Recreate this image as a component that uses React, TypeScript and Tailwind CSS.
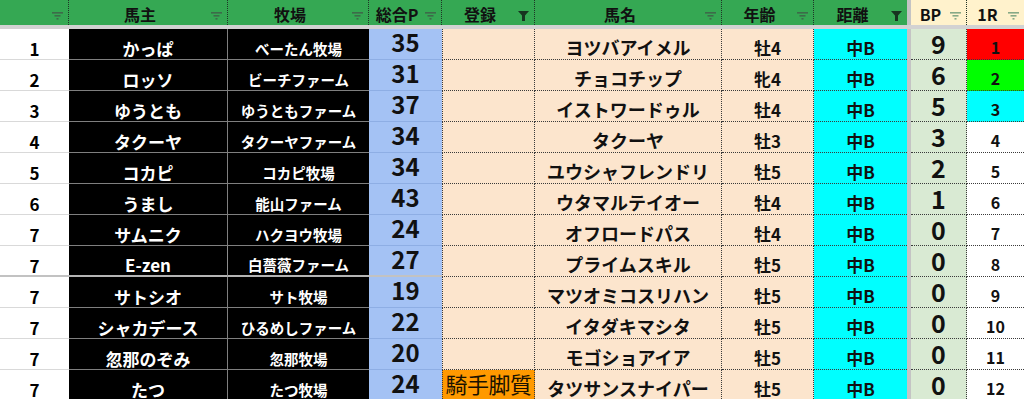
import React from 'react';

type Row = {
  rank: string;
  owner: string;
  farm: string;
  total: string;
  reg: string;
  horse: string;
  age: string;
  dist: string;
  bp: string;
  r1: string;
  r1bg: string;
};

const rows: Row[] = [
  { rank: '1', owner: 'かっぱ', farm: 'べーたん牧場', total: '35', reg: '', horse: 'ヨツバアイメル', age: '牡4', dist: '中B', bp: '9', r1: '1', r1bg: 'bg-[#ff0000]' },
  { rank: '2', owner: 'ロッソ', farm: 'ビーチファーム', total: '31', reg: '', horse: 'チョコチップ', age: '牝4', dist: '中B', bp: '6', r1: '2', r1bg: 'bg-[#00ff00]' },
  { rank: '3', owner: 'ゆうとも', farm: 'ゆうともファーム', total: '37', reg: '', horse: 'イストワードゥル', age: '牡4', dist: '中B', bp: '5', r1: '3', r1bg: 'bg-[#00ffff]' },
  { rank: '4', owner: 'タクーヤ', farm: 'タクーヤファーム', total: '34', reg: '', horse: 'タクーヤ', age: '牡3', dist: '中B', bp: '3', r1: '4', r1bg: 'bg-white' },
  { rank: '5', owner: 'コカピ', farm: 'コカピ牧場', total: '34', reg: '', horse: 'ユウシャフレンドリ', age: '牡5', dist: '中B', bp: '2', r1: '5', r1bg: 'bg-white' },
  { rank: '6', owner: 'うまし', farm: '能山ファーム', total: '43', reg: '', horse: 'ウタマルテイオー', age: '牡4', dist: '中B', bp: '1', r1: '6', r1bg: 'bg-white' },
  { rank: '7', owner: 'サムニク', farm: 'ハクヨウ牧場', total: '24', reg: '', horse: 'オフロードパス', age: '牡4', dist: '中B', bp: '0', r1: '7', r1bg: 'bg-white' },
  { rank: '7', owner: 'E-zen', farm: '白薔薇ファーム', total: '27', reg: '', horse: 'プライムスキル', age: '牡5', dist: '中B', bp: '0', r1: '8', r1bg: 'bg-white' },
  { rank: '7', owner: 'サトシオ', farm: 'サト牧場', total: '19', reg: '', horse: 'マツオミコスリハン', age: '牡5', dist: '中B', bp: '0', r1: '9', r1bg: 'bg-white' },
  { rank: '7', owner: 'シャカデース', farm: 'ひるめしファーム', total: '22', reg: '', horse: 'イタダキマシタ', age: '牡5', dist: '中B', bp: '0', r1: '10', r1bg: 'bg-white' },
  { rank: '7', owner: '忽那のぞみ', farm: '忽那牧場', total: '20', reg: '', horse: 'モゴショアイア', age: '牡5', dist: '中B', bp: '0', r1: '11', r1bg: 'bg-white' },
  { rank: '7', owner: 'たつ', farm: 'たつ牧場', total: '24', reg: '騎手脚質', horse: 'タツサンスナイパー', age: '牡5', dist: '中B', bp: '0', r1: '12', r1bg: 'bg-white' },
];

const cols = 'grid grid-cols-[69px_159px_141px_73px_93px_187px_92px_93px_4px_56px_57px]';

function SortIcon({ color }: { color: string }) {
  return (
    <svg width="11" height="8" viewBox="0 0 11 8">
      <rect x="0" y="0" width="11" height="1.6" fill={color} />
      <rect x="2.5" y="3" width="6" height="1.6" fill={color} />
      <rect x="4.5" y="6" width="2" height="1.6" fill={color} />
    </svg>
  );
}

function FilterIcon() {
  return (
    <svg width="11" height="10" viewBox="0 0 11 10">
      <polygon points="0,0 11,0 7,4.5 7,10 4,10 4,4.5" fill="#173420" />
    </svg>
  );
}

function HeadCell({ label, cream, filter, last }: { label: string; cream?: boolean; filter?: boolean; last?: boolean }) {
  return (
    <div
      className={`relative flex items-center justify-center pr-[16px] pt-[2px] text-[16px] leading-none font-bold text-[#111] ${
        cream ? 'bg-[#fff2cc]' : 'bg-[#35a853]'
      } ${last ? '' : 'border-r border-dotted border-[#1f3326]'}`}
    >
      {label}
      <span className={`absolute right-[5px] flex ${filter ? 'top-[11px]' : 'top-[12px]'}`}>
        {filter ? <FilterIcon /> : <SortIcon color={cream ? '#86a986' : '#3d6b49'} />}
      </span>
    </div>
  );
}

export default function App() {
  return (
    <div className="h-[399px] w-[1024px] overflow-hidden bg-white font-['Noto_Sans_CJK_JP','Noto_Sans',sans-serif]">
      <div className={`${cols} h-[25px]`}>
        <HeadCell label="" />
        <HeadCell label="馬主" />
        <HeadCell label="牧場" />
        <HeadCell label="総合P" />
        <HeadCell label="登録" filter />
        <HeadCell label="馬名" />
        <HeadCell label="年齢" />
        <HeadCell label="距離" filter last />
        <div className="bg-[#c4c4c4]" />
        <HeadCell label="BP" cream />
        <HeadCell label="1R" cream last />
      </div>
      <div className="h-[4px] bg-[#d2d2d2]" />

      {rows.map((r, i) => {
        // frozen-pane style line under row 8
        const split = i === 7;
        return (
          <div key={i} className={`${cols} h-[31px] leading-none font-bold`}>
            <div className={`flex items-center justify-center bg-white pt-[9px] text-[17px] text-black ${split ? 'border-b-2 border-[#c2c2c2]' : 'border-b border-[#d9d9d9]'}`}>
              {r.rank}
            </div>
            <div className={`flex items-center justify-center border-r bg-black pt-[8px] text-[17px] text-white ${split ? 'border-b-2 border-[#8c8c8c] border-b-[#b4b4b4]' : 'border-b border-[#7f7f7f]'}`}>
              {r.owner}
            </div>
            <div className={`flex items-center justify-center bg-black pt-[10px] text-[14.5px] text-white ${split ? 'border-b-2 border-[#b4b4b4]' : 'border-b border-[#7f7f7f]'}`}>
              {r.farm}
            </div>
            <div className={`flex items-center justify-center bg-[#a4c2f4] pb-[4px] text-[24px] text-[#111] ${split ? 'border-b-2 border-[#c2c2c2]' : 'border-b border-[#8eaee4]'}`}>
              {r.total}
            </div>
            <div
              className={`flex items-center justify-center border-x border-b border-dotted border-[#3a3a3a] pb-[4px] text-[22px] font-normal tracking-[-0.5px] text-[#1a1200] ${
                r.reg ? 'bg-[#ff9900]' : 'bg-[#fce5cd]'
              }`}
            >
              {r.reg}
            </div>
            <div className="flex items-center justify-center border-r border-b border-dotted border-[#3a3a3a] bg-[#fce5cd] pt-[5px] text-[18px] text-[#111]">
              {r.horse}
            </div>
            <div className="flex items-center justify-center border-r border-b border-dotted border-[#3a3a3a] bg-[#fce5cd] pt-[7px] text-[17px] text-[#111]">
              {r.age}
            </div>
            <div className="flex items-center justify-center border-b border-dotted border-[#3a3a3a] bg-[#00ffff] pt-[6px] text-[17px] text-[#111]">
              {r.dist}
            </div>
            <div className="bg-[#c4c4c4]" />
            <div className="flex items-center justify-center border-r border-b border-dotted border-[#3a3a3a] bg-[#d9ead3] pb-[1px] text-[25px] text-[#111]">
              {r.bp}
            </div>
            <div className={`flex items-center justify-center border-b border-dotted border-[#3a3a3a] pt-[6px] text-[16px] text-[#111] ${r.r1bg}`}>
              {r.r1}
            </div>
          </div>
        );
      })}
    </div>
  );
}
